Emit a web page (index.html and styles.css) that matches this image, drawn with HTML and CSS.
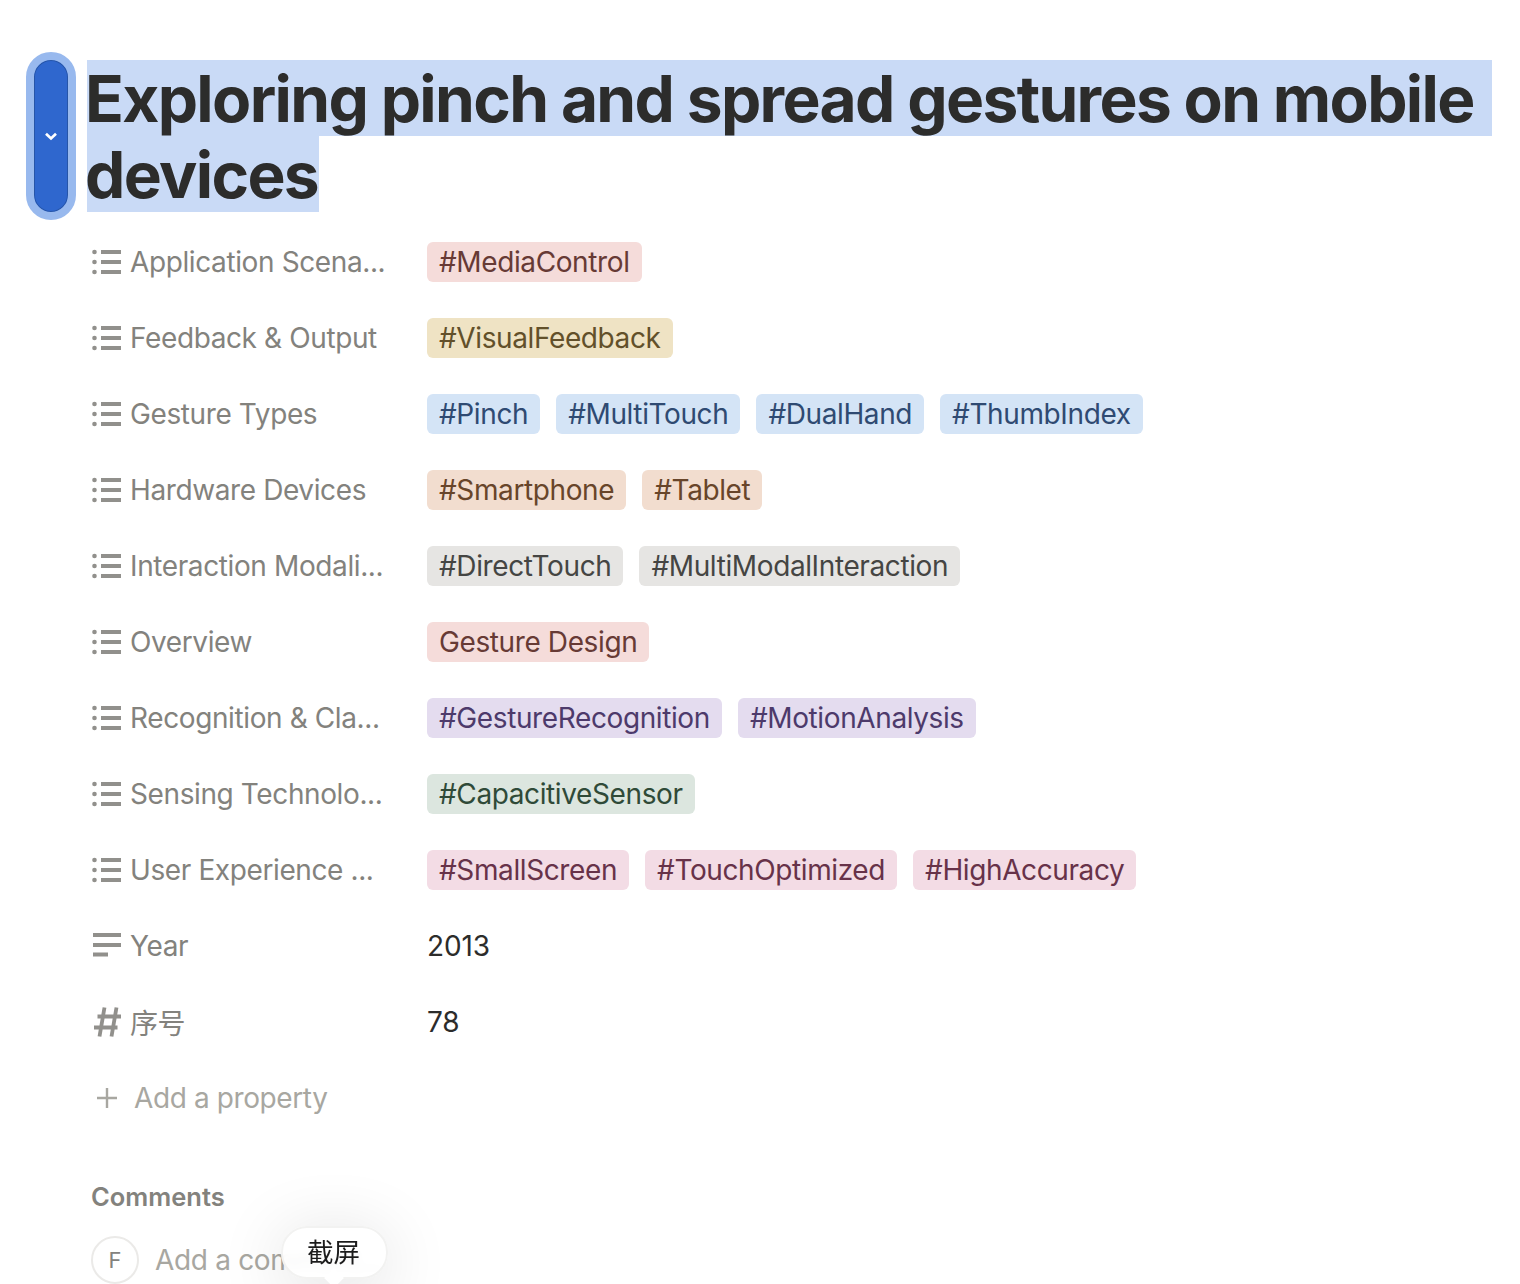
FILE: index.html
```html
<!DOCTYPE html>
<html lang="en">
<head>
<meta charset="utf-8">
<title>Exploring pinch and spread gestures on mobile devices</title>
<link rel="stylesheet" href="styles.css">
</head>
<body>
<main class="page">
  <div class="handle"><svg class="chev" width="14" height="9" viewBox="0 0 14 9"><path d="M2 1.800 7 6.500 12 1.800" fill="none" stroke="#fff" stroke-width="2.700"/></svg></div>
  <h1 class="title"><span class="sel sel-first">Exploring pinch and spread gestures on mobile&nbsp;</span><br><span class="sel">devices</span></h1>
  <section class="props">
    <div class="row"><div class="key"><svg class="ic" viewBox="0 0 30 26"><use href="#list"/></svg><span>Application Scena...</span></div><div class="val"><span class="tag red">#MediaControl</span></div></div>
    <div class="row"><div class="key"><svg class="ic" viewBox="0 0 30 26"><use href="#list"/></svg><span>Feedback &amp; Output</span></div><div class="val"><span class="tag yellow">#VisualFeedback</span></div></div>
    <div class="row"><div class="key"><svg class="ic" viewBox="0 0 30 26"><use href="#list"/></svg><span>Gesture Types</span></div><div class="val"><span class="tag blue">#Pinch</span><span class="tag blue">#MultiTouch</span><span class="tag blue">#DualHand</span><span class="tag blue">#ThumbIndex</span></div></div>
    <div class="row"><div class="key"><svg class="ic" viewBox="0 0 30 26"><use href="#list"/></svg><span>Hardware Devices</span></div><div class="val"><span class="tag orange">#Smartphone</span><span class="tag orange">#Tablet</span></div></div>
    <div class="row"><div class="key"><svg class="ic" viewBox="0 0 30 26"><use href="#list"/></svg><span>Interaction Modali...</span></div><div class="val"><span class="tag gray">#DirectTouch</span><span class="tag gray">#MultiModalInteraction</span></div></div>
    <div class="row"><div class="key"><svg class="ic" viewBox="0 0 30 26"><use href="#list"/></svg><span>Overview</span></div><div class="val"><span class="tag red">Gesture Design</span></div></div>
    <div class="row"><div class="key"><svg class="ic" viewBox="0 0 30 26"><use href="#list"/></svg><span>Recognition &amp; Cla...</span></div><div class="val"><span class="tag purple">#GestureRecognition</span><span class="tag purple">#MotionAnalysis</span></div></div>
    <div class="row"><div class="key"><svg class="ic" viewBox="0 0 30 26"><use href="#list"/></svg><span>Sensing Technolo...</span></div><div class="val"><span class="tag green">#CapacitiveSensor</span></div></div>
    <div class="row"><div class="key"><svg class="ic" viewBox="0 0 30 26"><use href="#list"/></svg><span>User Experience ...</span></div><div class="val"><span class="tag pink">#SmallScreen</span><span class="tag pink">#TouchOptimized</span><span class="tag pink">#HighAccuracy</span></div></div>
    <div class="row"><div class="key"><svg class="ic" viewBox="0 0 30 26"><path d="M1 0h28v4H1zM1 10h28v4H1zM1 19.500h15v4H1z" fill="#91908c"/></svg><span>Year</span></div><div class="val plain">2013</div></div>
    <div class="row"><div class="key"><svg class="ic ic-tall" viewBox="0 0 30 32"><path d="M12.500 1.500 7.500 30.500M24.500 1.500 19.500 30.500M5.500 10.500H29M2 21.500H25.500" fill="none" stroke="#91908c" stroke-width="3.800"/></svg><span class="cjk">序号</span></div><div class="val plain">78</div></div>
    <div class="row add"><svg class="plus" width="22" height="22" viewBox="0 0 22 22"><path d="M11 1v20M1 11h20" stroke="#a8a7a1" stroke-width="2.400"/></svg><span>Add a property</span></div>
  </section>
  <section class="comments">
    <h2 class="c-head">Comments</h2>
    <div class="c-row"><div class="avatar">F</div><span class="c-input">Add a comment...</span></div>
  </section>
  <div class="tip"><span class="tip-text">截屏</span></div>
  <span class="tip-arrow"></span>
</main>
<svg class="defs" width="0" height="0"><defs><g id="list"><circle cx="2.500" cy="3" r="2.300" fill="#91908c"/><circle cx="2.500" cy="13" r="2.300" fill="#91908c"/><circle cx="2.500" cy="23" r="2.300" fill="#91908c"/><path d="M9 1h20v4H9zM9 11h20v4H9zM9 21h20v4H9z" fill="#91908c"/></g></defs></svg>
</body>
</html>
```
FILE: styles.css
```css
html, body { margin: 0; padding: 0; background: #fff; }
body { width: 1520px; height: 1284px; overflow: hidden; font-family: Inter, "Noto Sans CJK SC", sans-serif; color: #2c2c2b; }
.page { position: relative; height: 1284px; padding: 60px 0 0 87px; box-sizing: border-box; overflow: hidden; }
.handle { position: absolute; left: 26px; top: 52px; width: 50px; height: 168px; box-sizing: border-box; border: 8px solid #98b9ee; border-radius: 25px; background: #2f67ce; box-shadow: inset 0 0 0 1px #2655a8; display: flex; align-items: center; justify-content: center; }
.chev { display: block; }
.title { margin: 0; font-size: 64px; line-height: 76px; font-weight: 700; letter-spacing: -1.66px; color: #2c2c2b; white-space: nowrap; }
.sel { background: #c9daf6; display: inline-block; height: 76px; line-height: 78px; vertical-align: top; text-indent: -2px; padding-right: 1px; }
.sel-first { padding-right: 5px; }
.props { margin-top: 12px; }
.row { display: flex; align-items: center; height: 76px; font-size: 28px; letter-spacing: -0.39px; }
.key { width: 340px; display: flex; align-items: center; color: #83827d; padding-left: 5px; box-sizing: border-box; white-space: nowrap; }
.ic { width: 30px; height: 26px; margin-right: 8px; flex: none; }
.ic-tall { height: 32px; }
.cjk { font-family: "Noto Sans CJK SC", sans-serif; }
.val { display: flex; gap: 16px; margin-left: 0; }
.plain { color: #2c2c2b; letter-spacing: -0.1px; }
.tag { height: 40px; line-height: 40px; padding: 0 12px; border-radius: 6px; white-space: nowrap; }
.red { background: #f5dcda; color: #673a35; }
.yellow { background: #efe3c4; color: #62502a; }
.blue { background: #d4e4f6; color: #2f4a72; }
.orange { background: #f2ddcf; color: #68452a; }
.gray { background: #e6e5e3; color: #454543; }
.purple { background: #e4dcef; color: #4d3a6b; }
.green { background: #dce6df; color: #2f4a38; }
.pink { background: #f3dce5; color: #673249; }
.add { padding-left: 9px; color: #a8a7a1; }
.plus { margin-right: 16px; }
.comments { margin-top: 45px; padding-left: 4px; }
.c-head { margin: 0; font-size: 25.500px; line-height: 32px; font-weight: 600; color: #83827d; }
.c-row { display: flex; align-items: center; margin-top: 23px; }
.avatar { width: 48px; height: 48px; box-sizing: border-box; border: 2px solid #ebeae8; border-radius: 50%; display: flex; align-items: center; justify-content: center; font-size: 22px; color: #83827d; margin-right: 16px; }
.c-input { font-size: 28px; letter-spacing: -0.32px; color: #a8a7a1; }
.tip { position: absolute; left: 281px; top: 1226px; width: 107px; height: 53px; box-sizing: border-box; background: rgba(255,255,255,.9); backdrop-filter: blur(5px); border: 2px solid #f2f2f1; border-radius: 26px; box-shadow: 0 10px 70px rgba(0,0,0,.14); display: flex; align-items: center; justify-content: center; padding: 0 2px 5px 0; }
.tip-text { font-family: "Noto Sans CJK SC", sans-serif; font-size: 26.500px; color: #1c1c1c; }
.tip-arrow { position: absolute; left: 327px; top: 1271px; width: 14px; height: 14px; background: #fff; transform: rotate(45deg); }
.defs { position: absolute; }
```
